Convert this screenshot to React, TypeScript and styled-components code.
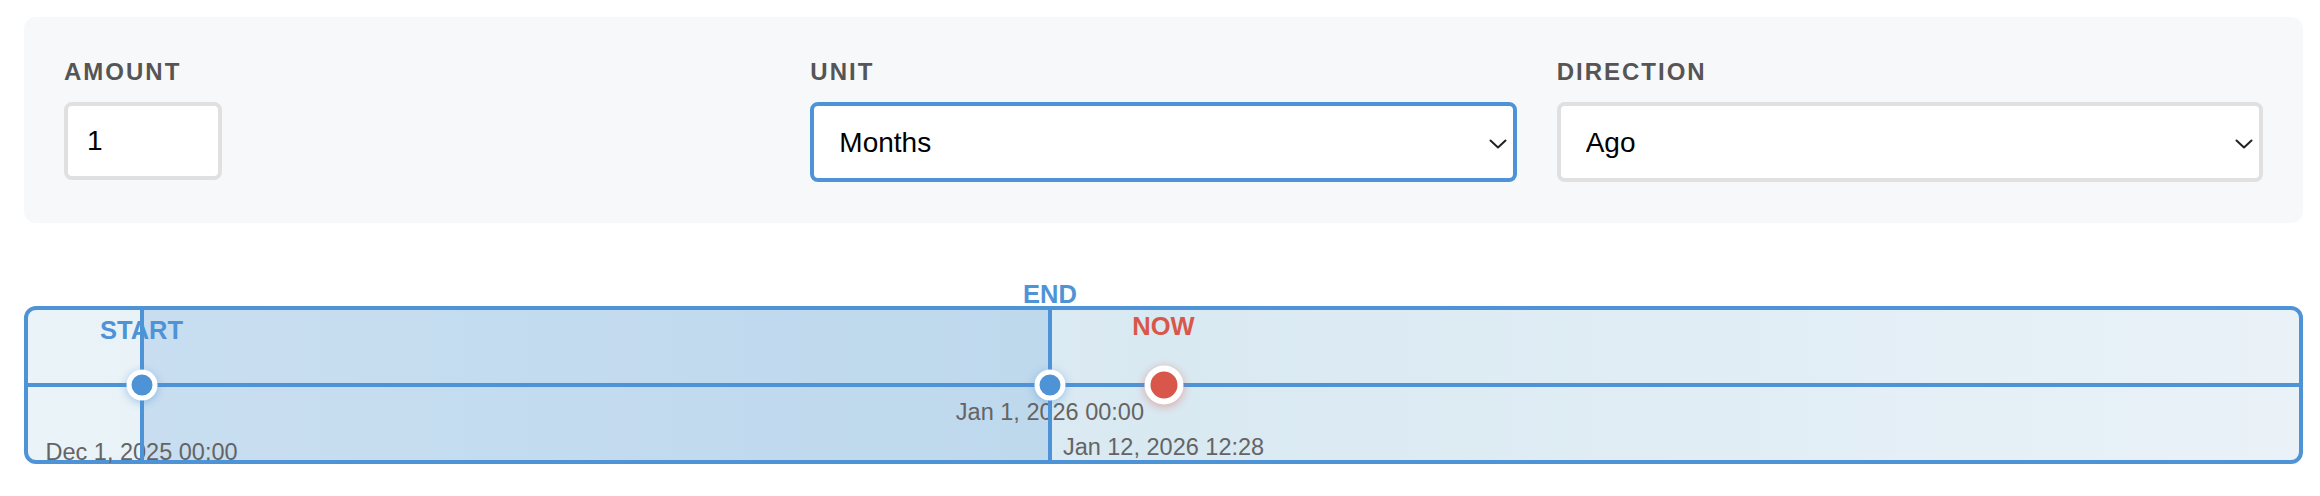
import React from 'react';
import styled, { createGlobalStyle } from 'styled-components';

const FONT = '"Liberation Sans", Arial, Helvetica, sans-serif';
const BLUE = '#4f93d7';
const RED = '#d9574a';

const GlobalStyle = createGlobalStyle`
  html, body { margin: 0; padding: 0; background: #ffffff; }
  body { font-family: ${FONT}; }
  *, *::before, *::after { box-sizing: border-box; }
`;

const Page = styled.div`
  padding: 17px 17px 0 24px;
`;

const Controls = styled.div`
  display: grid;
  grid-template-columns: repeat(3, 1fr);
  column-gap: 40px;
  padding: 40px 40px 41px;
  background: #f7f8fa;
  border-radius: 12px;
`;

const Field = styled.div`
  display: flex;
  flex-direction: column;
  align-items: flex-start;
  min-width: 0;
`;

const FieldLabel = styled.label`
  font-family: ${FONT};
  font-size: 24px;
  line-height: 30px;
  font-weight: 700;
  letter-spacing: 2px;
  color: #555555;
  text-transform: uppercase;
  margin-bottom: 15px;
`;

const NumberInput = styled.input`
  width: 158px;
  height: 78px;
  padding: 0 19px;
  border: 4px solid #e0e0e0;
  border-radius: 8px;
  background: #ffffff;
  font-family: ${FONT};
  font-size: 28px;
  color: #000000;
  outline: none;
`;

const SelectWrap = styled.div`
  position: relative;
  width: 100%;
`;

const Select = styled.select<{ $focused?: boolean }>`
  appearance: none;
  -webkit-appearance: none;
  display: block;
  width: 100%;
  height: 80px;
  padding: 0 60px 0 25px;
  border: 4px solid ${(p) => (p.$focused ? BLUE : '#e0e0e0')};
  border-radius: 8px;
  background: #ffffff;
  font-family: ${FONT};
  font-size: 28px;
  color: #000000;
  outline: none;
`;

const Chevron = styled.svg`
  position: absolute;
  right: 10px;
  top: 37px;
  width: 18px;
  height: 10px;
  pointer-events: none;
`;

const Timeline = styled.div`
  position: relative;
  margin-top: 83px;
  height: 158px;
  border: 4px solid ${BLUE};
  border-radius: 12px;
  background: linear-gradient(90deg, #eaf3f8 0%, #d9e9f2 50%, #e6f0f7 90%, #eaf2f8 100%);
`;

const Range = styled.div`
  position: absolute;
  top: 0;
  bottom: 0;
  background: rgba(74, 144, 217, 0.2);
`;

const Axis = styled.div`
  position: absolute;
  left: 0;
  right: 0;
  top: 73px;
  height: 4px;
  background: ${BLUE};
`;

const Tick = styled.div`
  position: absolute;
  top: 0;
  bottom: 0;
  width: 4px;
  margin-left: -2px;
  background: ${BLUE};
`;

const MarkerLabel = styled.div<{ $top: number; $now?: boolean }>`
  position: absolute;
  top: ${(p) => p.$top}px;
  transform: translateX(-50%);
  font-family: ${FONT};
  font-size: 25.5px;
  line-height: 25px;
  font-weight: 700;
  white-space: nowrap;
  color: ${(p) => (p.$now ? RED : BLUE)};
`;

const MarkerDate = styled.div<{ $top: number }>`
  position: absolute;
  top: ${(p) => p.$top}px;
  transform: translateX(-50%);
  font-family: ${FONT};
  font-size: 23.5px;
  line-height: 23px;
  white-space: nowrap;
  color: #646464;
`;

const Dot = styled.div<{ $now?: boolean }>`
  position: absolute;
  top: 75px;
  transform: translate(-50%, -50%);
  width: ${(p) => (p.$now ? 39 : 31)}px;
  height: ${(p) => (p.$now ? 39 : 31)}px;
  border-radius: 50%;
  border: ${(p) => (p.$now ? 6 : 5)}px solid #ffffff;
  background: ${(p) => (p.$now ? RED : BLUE)};
  box-shadow: ${(p) =>
    p.$now
      ? '0 2px 10px rgba(217, 87, 74, 0.45)'
      : '0 2px 8px rgba(74, 144, 217, 0.45)'};
`;

type Marker = {
  id: string;
  label: string;
  date: string;
  pos: number;
  now?: boolean;
  labelTop: number;
  dateTop: number;
};

const markers: Marker[] = [
  { id: 'start', label: 'START', date: 'Dec 1, 2025 00:00', pos: 5, labelTop: 8, dateTop: 131 },
  { id: 'end', label: 'END', date: 'Jan 1, 2026 00:00', pos: 45, labelTop: -28, dateTop: 91 },
  { id: 'now', label: 'NOW', date: 'Jan 12, 2026 12:28', pos: 50, now: true, labelTop: 4, dateTop: 126 },
];

const ChevronIcon = () => (
  <Chevron viewBox="0 0 18 10" fill="none">
    <path d="M1.5 1.5 L9 8.5 L16.5 1.5" stroke="#222222" strokeWidth="2" strokeLinecap="round" strokeLinejoin="round" />
  </Chevron>
);

export default function App() {
  const start = markers[0].pos;
  const end = markers[1].pos;
  return (
    <Page>
      <GlobalStyle />
      <Controls>
        <Field>
          <FieldLabel>Amount</FieldLabel>
          <NumberInput type="text" defaultValue="1" />
        </Field>
        <Field>
          <FieldLabel>Unit</FieldLabel>
          <SelectWrap>
            <Select $focused defaultValue="months">
              <option value="days">Days</option>
              <option value="weeks">Weeks</option>
              <option value="months">Months</option>
              <option value="years">Years</option>
            </Select>
            <ChevronIcon />
          </SelectWrap>
        </Field>
        <Field>
          <FieldLabel>Direction</FieldLabel>
          <SelectWrap>
            <Select defaultValue="ago">
              <option value="ago">Ago</option>
              <option value="fromnow">From now</option>
            </Select>
            <ChevronIcon />
          </SelectWrap>
        </Field>
      </Controls>
      <Timeline>
        <Range style={{ left: `${start}%`, width: `${end - start}%` }} />
        {markers.map((m) => (
          <React.Fragment key={m.id + '-text'}>
            <MarkerLabel $top={m.labelTop} $now={m.now} style={{ left: `${m.pos}%` }}>
              {m.label}
            </MarkerLabel>
            <MarkerDate $top={m.dateTop} style={{ left: `${m.pos}%` }}>
              {m.date}
            </MarkerDate>
          </React.Fragment>
        ))}
        <Axis />
        {markers
          .filter((m) => !m.now)
          .map((m) => (
            <Tick key={m.id + '-tick'} style={{ left: `${m.pos}%` }} />
          ))}
        {markers.map((m) => (
          <Dot key={m.id + '-dot'} $now={m.now} style={{ left: `${m.pos}%` }} />
        ))}
      </Timeline>
    </Page>
  );
}
